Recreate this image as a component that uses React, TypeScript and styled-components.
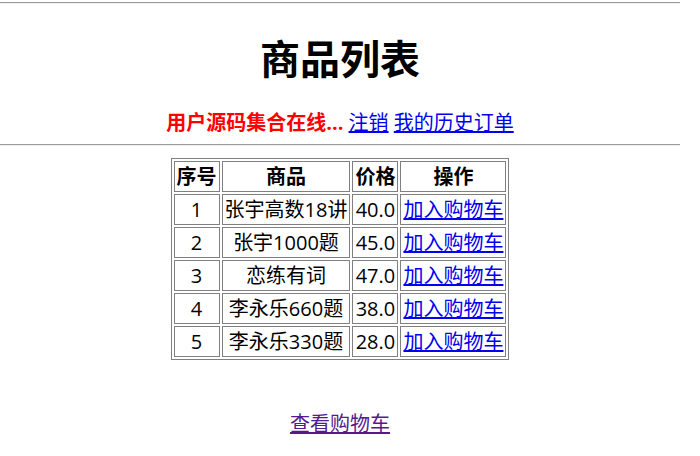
import styled, { createGlobalStyle } from 'styled-components'

const Global = createGlobalStyle`
  html, body {
    margin: 0;
    padding: 0;
    background: #fff;
  }
  body {
    font-family: 'Open Sans', 'Noto Sans CJK SC', sans-serif;
    color: #000;
  }
`

const Page = styled.div`
  width: 680px;
  padding-top: 1px;
  text-align: center;
`
const Rule = styled.hr<{ $top?: number }>`
  margin: ${(p) => p.$top ?? 0}px 0 0;
  height: 0;
  border: 0;
  border-top: 1px solid #9a9a9a;
  border-bottom: 1px solid #eeeeee;
`
const Title = styled.h1`
  font-size: 40px;
  font-weight: 700;
  line-height: 54px;
  margin: 28px 0 0;
`
const UserBar = styled.div`
  font-size: 20px;
  line-height: 27px;
  margin-top: 23px;
`
const UserName = styled.span`
  color: #ff0000;
  font-weight: 700;
`
const Link = styled.a<{ $visited?: boolean }>`
  color: ${(p) => (p.$visited ? '#551a8b' : '#0000ee')};
  text-decoration: underline;
  cursor: pointer;
`
const Table = styled.table`
  margin: 12px auto 0;
  border: 1px solid #808080;
  border-spacing: 2px;
  font-size: 20px;
  line-height: 27px;
`
const Th = styled.th`
  border: 1px solid #808080;
  padding: 1px 2px;
  font-weight: 700;
  text-align: center;
`
const Td = styled.td`
  border: 1px solid #808080;
  padding: 1px 2px;
  text-align: center;
  white-space: nowrap;
`
const Footer = styled.div`
  font-size: 20px;
  line-height: 27px;
  margin-top: 50px;
`

const ITEMS = [
  { id: 1, name: '张宇高数18讲', price: '40.0' },
  { id: 2, name: '张宇1000题', price: '45.0' },
  { id: 3, name: '恋练有词', price: '47.0' },
  { id: 4, name: '李永乐660题', price: '38.0' },
  { id: 5, name: '李永乐330题', price: '28.0' },
]

export default function App() {
  return (
    <Page>
      <Global />
      <Rule $top={1} />
      <Title>商品列表</Title>
      <UserBar>
        <UserName>用户源码集合在线...</UserName> <Link>注销</Link> <Link>我的历史订单</Link>
      </UserBar>
      <Rule $top={8} />
      <Table>
        <thead>
          <tr>
            <Th>序号</Th>
            <Th>商品</Th>
            <Th>价格</Th>
            <Th>操作</Th>
          </tr>
        </thead>
        <tbody>
          {ITEMS.map((item) => (
            <tr key={item.id}>
              <Td>{item.id}</Td>
              <Td>{item.name}</Td>
              <Td>{item.price}</Td>
              <Td>
                <Link>加入购物车</Link>
              </Td>
            </tr>
          ))}
        </tbody>
      </Table>
      <Footer>
        <Link $visited>查看购物车</Link>
      </Footer>
    </Page>
  )
}
